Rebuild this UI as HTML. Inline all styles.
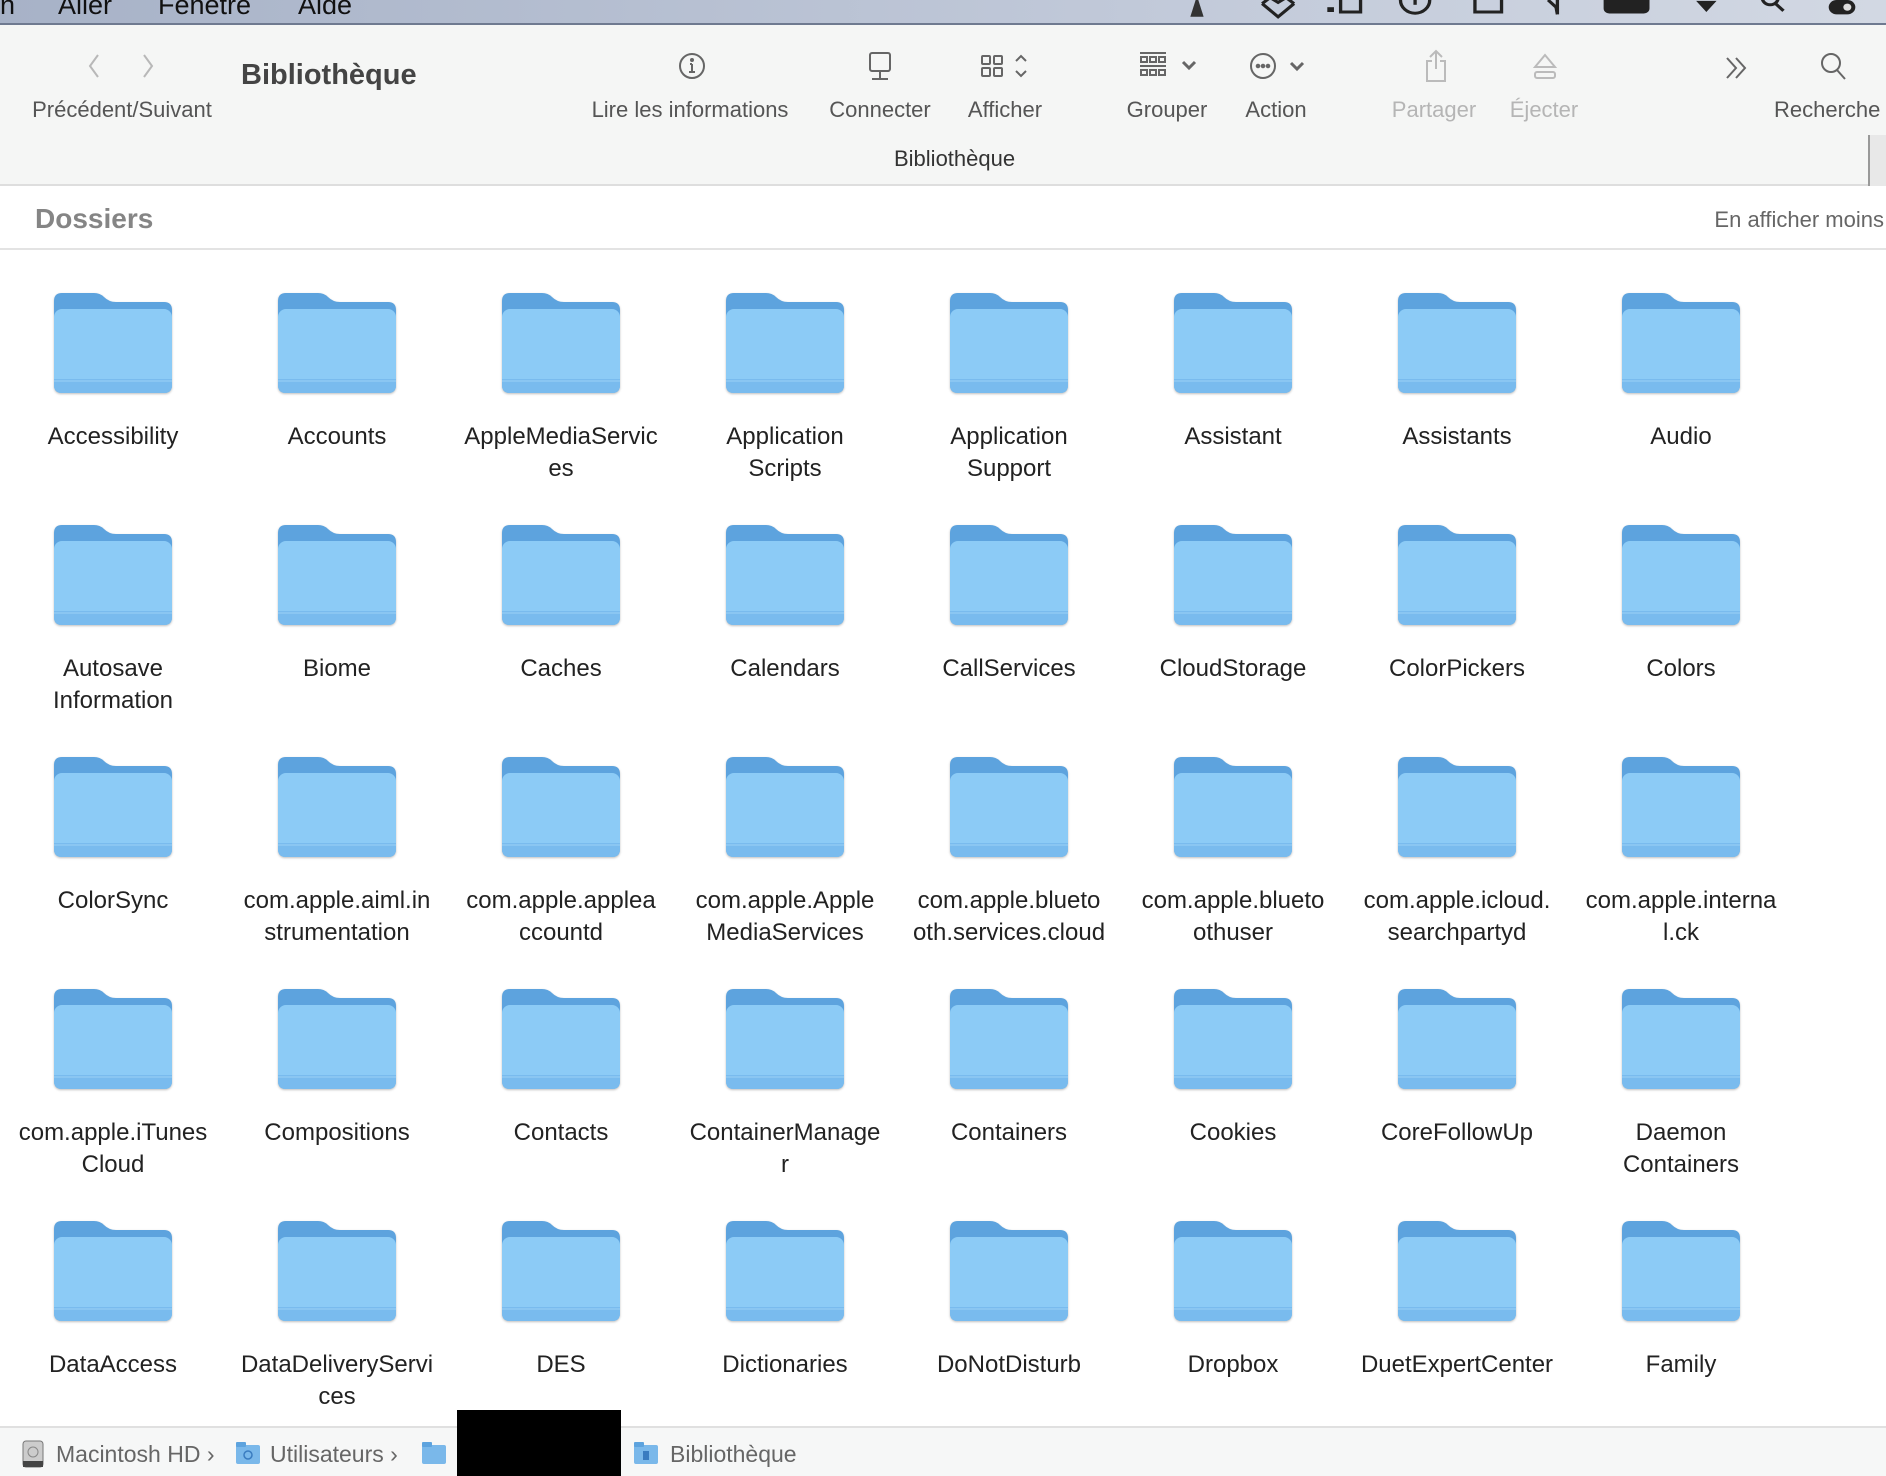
<!DOCTYPE html>
<html><head><meta charset="utf-8">
<style>
*{margin:0;padding:0;box-sizing:border-box}
body{width:1886px;height:1476px;overflow:hidden;background:#fff;font-family:"Liberation Sans",sans-serif;position:relative}
.menubar{position:absolute;left:0;top:0;width:1886px;height:25px;background:linear-gradient(90deg,#a7b2c7,#c1c9d9 60%,#d2d8e3);border-bottom:2px solid #6f7a90;overflow:hidden}
.menubar span{position:absolute;top:-10px;font-size:27px;color:#111}
.tb{position:absolute;left:0;top:25px;width:1886px;height:161px;background:#f5f6f5;border-bottom:2px solid #dedede}
.lbl{position:absolute;top:72px;font-size:22px;color:#555;white-space:nowrap;transform:translateX(-50%)}
.dis{color:#b5b5b5}
.ic{position:absolute}
.hdr{position:absolute;left:0;top:188px;width:1886px;height:62px;border-bottom:2px solid #e3e3e3}
.f{position:absolute;width:224px;text-align:center}
.f svg{display:block;margin:0 auto;filter:drop-shadow(0 1px 1px rgba(0,0,0,0.25))}
.f div{margin-top:28px;font-size:24px;line-height:32px;color:#222}
.path{position:absolute;left:0;top:1426px;width:1886px;height:50px;background:#f6f7f7;border-top:2px solid #e0e0e0;font-size:23px;color:#666}
.path span{position:absolute;top:13px}
</style></head><body>
<div class="menubar">
<span style="left:0">n</span><span style="left:58px">Aller</span><span style="left:158px">Fenêtre</span><span style="left:298px">Aide</span>
<svg style="position:absolute;left:1180px;top:0" width="706" height="25" fill="none" stroke="#222" stroke-width="2.5">
<g transform="translate(5,0) scale(1.33,1.2)">
<path d="M8 0 L4 14 H14 L10 0Z" fill="#333" stroke="none"/>
<path d="M58 3 L70 14 L82 3 M58 3 L64 -2 L70 2 L76 -2 L82 3"/>
<rect x="107" y="6" width="5" height="4" fill="#222" stroke="none"/><rect x="117" y="-3" width="15" height="13"/>
<circle cx="173" cy="0" r="11"/><path d="M173 -2v6"/>
<rect x="218" y="-3" width="20" height="13"/>
<path d="M273 0 L279 6 L280 12 M280 -2 L280 12"/>
<rect x="316" y="-4" width="32" height="14" rx="3" fill="#222"/>
<path d="M387 2 L392 8 L397 2Z" fill="#222"/>
<circle cx="440" cy="-2" r="6"/><path d="M444 3 L450 9"/>
<rect x="484" y="0" width="20" height="12" rx="6" fill="#222" stroke="none"/><circle cx="498" cy="6" r="3" fill="#ddd" stroke="none"/>
</g>
</svg>
</div>
<div class="tb">
<svg class="ic" style="left:88px;top:28px" width="70" height="26" fill="none" stroke="#b8b8b8" stroke-width="2"><path d="M10 2 L2 13 L10 24"/><path d="M56 2 L64 13 L56 24"/></svg>
<div class="lbl" style="left:122px">Précédent/Suivant</div>
<div style="position:absolute;left:241px;top:34px;font-size:29px;font-weight:bold;color:#444">Bibliothèque</div>
<svg class="ic" style="left:678px;top:27px" width="28" height="28" fill="none" stroke="#666" stroke-width="2"><circle cx="14" cy="14" r="12"/><path d="M14 12v8M11 20h6M12 12h2"/><circle cx="14" cy="8" r="1" fill="#666"/></svg>
<div class="lbl" style="left:690px">Lire les informations</div>
<svg class="ic" style="left:866px;top:26px" width="28" height="32" fill="none" stroke="#666" stroke-width="2"><rect x="4" y="2" width="20" height="18" rx="2"/><path d="M14 20v8M6 28h16"/></svg>
<div class="lbl" style="left:880px">Connecter</div>
<svg class="ic" style="left:980px;top:28px" width="56" height="28" fill="none" stroke="#666" stroke-width="2"><rect x="2" y="3" width="8" height="8" rx="1"/><rect x="14" y="3" width="8" height="8" rx="1"/><rect x="2" y="15" width="8" height="8" rx="1"/><rect x="14" y="15" width="8" height="8" rx="1"/><path d="M36 8l5-5 5 5M36 18l5 5 5-5"/></svg>
<div class="lbl" style="left:1005px">Afficher</div>
<svg class="ic" style="left:1138px;top:26px" width="62" height="30" fill="none" stroke="#666" stroke-width="2"><path d="M2 2h26M2 15h26"/><rect x="3" y="6" width="6" height="5"/><rect x="12" y="6" width="6" height="5"/><rect x="21" y="6" width="6" height="5"/><rect x="3" y="19" width="6" height="5"/><rect x="12" y="19" width="6" height="5"/><rect x="21" y="19" width="6" height="5"/><path d="M45 11l6 6 6-6" stroke-width="3"/></svg>
<div class="lbl" style="left:1167px">Grouper</div>
<svg class="ic" style="left:1249px;top:27px" width="62" height="30" fill="none" stroke="#666" stroke-width="2"><circle cx="14" cy="14" r="12"/><circle cx="9" cy="14" r="1.3" fill="#666"/><circle cx="14" cy="14" r="1.3" fill="#666"/><circle cx="19" cy="14" r="1.3" fill="#666"/><path d="M42 11l6 6 6-6" stroke-width="3"/></svg>
<div class="lbl" style="left:1276px">Action</div>
<svg class="ic" style="left:1424px;top:24px" width="24" height="34" fill="none" stroke="#bbb" stroke-width="2"><path d="M12 2v18M6 8l6-6 6 6M8 12H3v20h18V12h-5"/></svg>
<div class="lbl dis" style="left:1434px">Partager</div>
<svg class="ic" style="left:1532px;top:28px" width="26" height="28" fill="none" stroke="#bbb" stroke-width="2"><path d="M13 2L3 14h20z"/><rect x="3" y="19" width="20" height="6" rx="2"/></svg>
<div class="lbl dis" style="left:1544px">Éjecter</div>
<svg class="ic" style="left:1724px;top:30px" width="26" height="26" fill="none" stroke="#666" stroke-width="2"><path d="M3 3l9 10-9 10M12 3l9 10-9 10"/></svg>
<svg class="ic" style="left:1820px;top:27px" width="28" height="30" fill="none" stroke="#666" stroke-width="2"><circle cx="11" cy="11" r="9"/><path d="M17 18l8 9"/></svg>
<div class="lbl" style="left:1774px;transform:none">Recherche</div>
<div style="position:absolute;left:894px;top:121px;font-size:22px;color:#333">Bibliothèque</div>
<div style="position:absolute;left:1868px;top:110px;width:20px;height:51px;background:#e8e8e8;border-left:2px solid #999"></div>
</div>
<div class="hdr">
<div style="position:absolute;left:35px;top:15px;font-size:28px;font-weight:bold;color:#858585">Dossiers</div>
<div style="position:absolute;right:2px;top:19px;font-size:22px;color:#666">En afficher moins</div>
</div>
<svg width="0" height="0" style="position:absolute"><defs>
<symbol id="fd" viewBox="0 0 118 100">
<path d="M0 8 Q0 0 8 0 H40 Q46 0 50 4 Q55 9 62 9 H110 Q118 9 118 17 V92 Q118 100 110 100 H8 Q0 100 0 92 Z" fill="#5da3de"/>
<rect x="0" y="16" width="118" height="84" rx="8" fill="#8ccbf6"/>
<path d="M0 86 H118 V92 Q118 100 110 100 H8 Q0 100 0 92 Z" fill="#79bbee"/>
<path d="M0 88H118" stroke="#8fcaf3" stroke-width="1.5"/>
</symbol></defs></svg>
<div id="grid"></div>
<script>
var names=[["Accessibility","Accounts","AppleMediaServic<br>es","Application<br>Scripts","Application<br>Support","Assistant","Assistants","Audio"],
["Autosave<br>Information","Biome","Caches","Calendars","CallServices","CloudStorage","ColorPickers","Colors"],
["ColorSync","com.apple.aiml.in<br>strumentation","com.apple.applea<br>ccountd","com.apple.Apple<br>MediaServices","com.apple.blueto<br>oth.services.cloud","com.apple.blueto<br>othuser","com.apple.icloud.<br>searchpartyd","com.apple.interna<br>l.ck"],
["com.apple.iTunes<br>Cloud","Compositions","Contacts","ContainerManage<br>r","Containers","Cookies","CoreFollowUp","Daemon<br>Containers"],
["DataAccess","DataDeliveryServi<br>ces","DES","Dictionaries","DoNotDisturb","Dropbox","DuetExpertCenter","Family"]];
var h="";
for(var r=0;r<5;r++)for(var c=0;c<8;c++){
h+='<div class="f" style="left:'+(113+c*224-112)+'px;top:'+(293+r*232)+'px"><svg width="118" height="100"><use href="#fd"/></svg><div>'+names[r][c]+'</div></div>';}
document.getElementById("grid").innerHTML=h;
</script>
<div class="path">
<svg style="position:absolute;left:22px;top:12px" width="22" height="28"><rect x="1" y="1" width="20" height="26" rx="3" fill="#ccc" stroke="#777"/><circle cx="11" cy="12" r="5" fill="none" stroke="#888"/><rect x="1" y="21" width="20" height="6" fill="#444"/></svg>
<span style="left:56px">Macintosh HD ›</span>
<svg style="position:absolute;left:236px;top:14px" width="24" height="22"><rect x="0" y="3" width="24" height="19" rx="2" fill="#7ab8ea"/><rect x="0" y="0" width="10" height="5" rx="1" fill="#5da3de"/><circle cx="12" cy="13" r="4" fill="none" stroke="#3a7cc0" stroke-width="1.5"/></svg>
<span style="left:270px">Utilisateurs ›</span>
<svg style="position:absolute;left:422px;top:14px" width="24" height="22"><rect x="0" y="3" width="24" height="19" rx="2" fill="#7ab8ea"/><rect x="0" y="0" width="10" height="5" rx="1" fill="#5da3de"/></svg>
<svg style="position:absolute;left:634px;top:14px" width="24" height="22"><rect x="0" y="3" width="24" height="19" rx="2" fill="#7ab8ea"/><rect x="0" y="0" width="10" height="5" rx="1" fill="#5da3de"/><rect x="9" y="9" width="6" height="9" fill="#3a7cc0"/></svg>
<span style="left:670px">Bibliothèque</span>
</div>
<div style="position:absolute;left:457px;top:1410px;width:164px;height:66px;background:#000"></div>
</body></html>
